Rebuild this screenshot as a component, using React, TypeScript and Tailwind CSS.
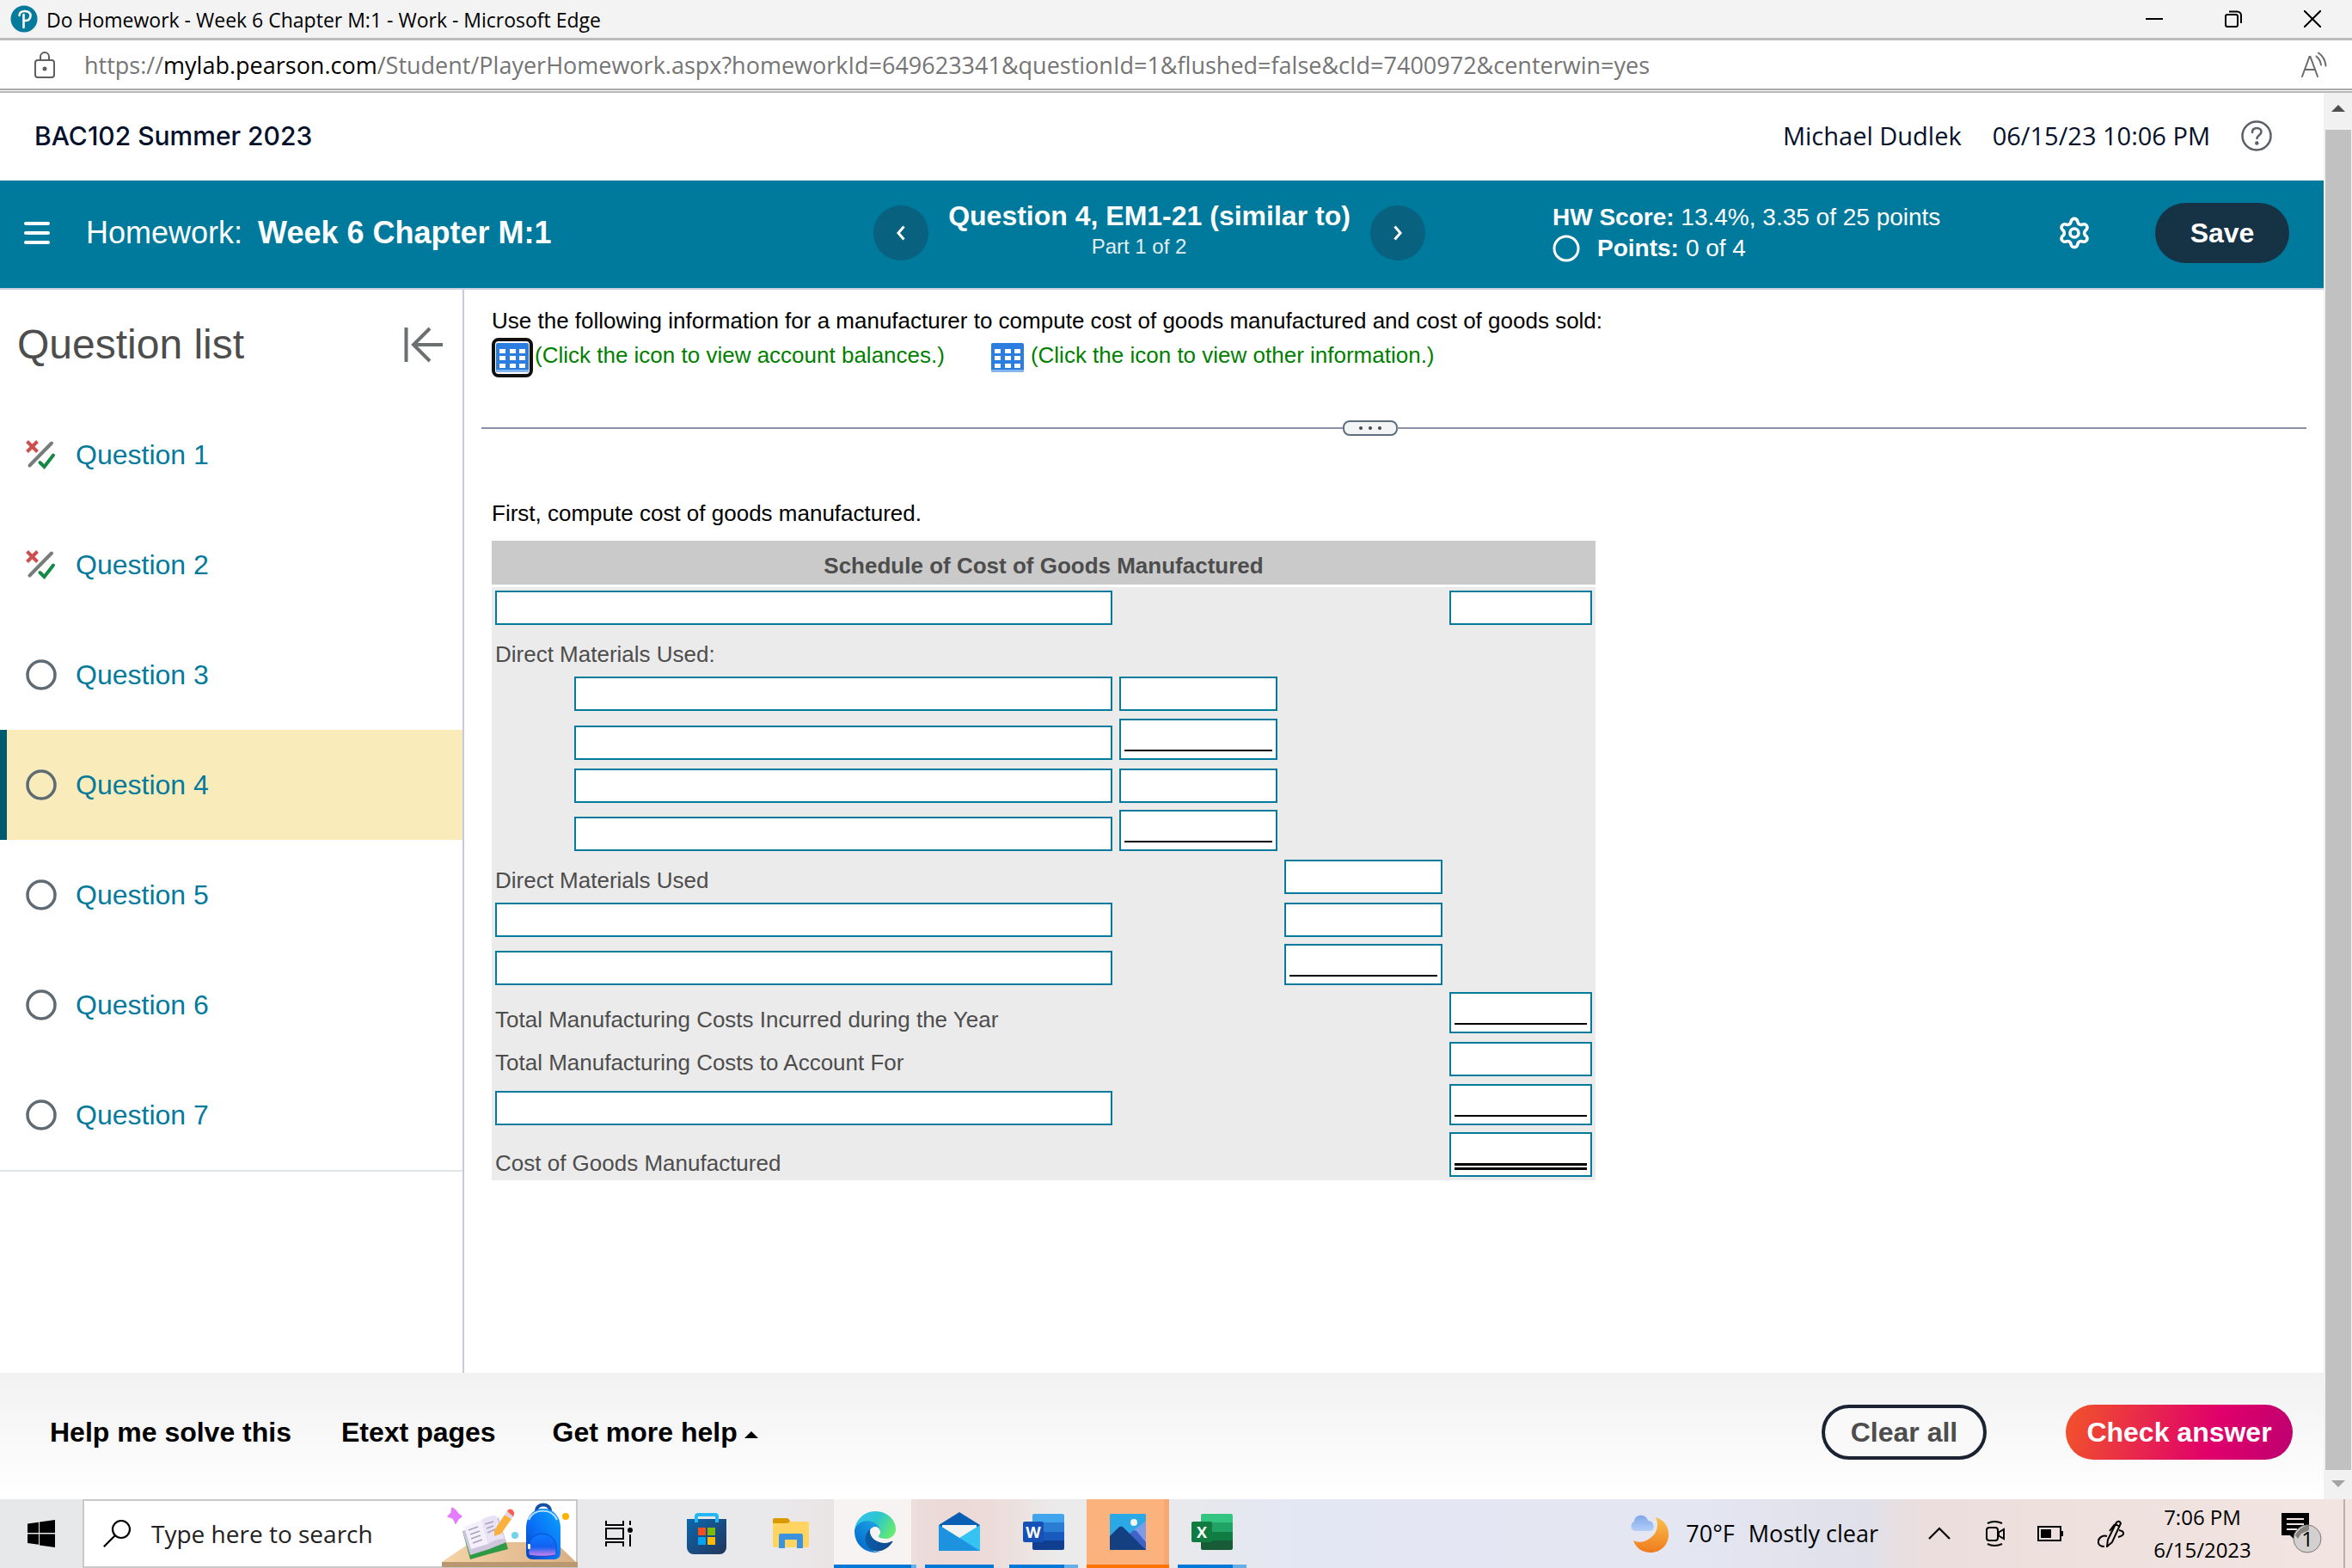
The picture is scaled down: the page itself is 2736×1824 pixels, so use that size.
import React, { useState } from "react";
import { Settings } from "lucide-react";

type Status = "partial" | "open";

const questions: { id: number; status: Status }[] = [
  { id: 1, status: "partial" },
  { id: 2, status: "partial" },
  { id: 3, status: "open" },
  { id: 4, status: "open" },
  { id: 5, status: "open" },
  { id: 6, status: "open" },
  { id: 7, status: "open" },
];

type Line = "none" | "single" | "double";

type ScheduleRow = {
  height: string;
  label?: string;
  name?: "full" | "indent";
  col?: 1 | 2 | 3;
  line?: Line;
};

const schedule: ScheduleRow[] = [
  { height: "h-[50px]", name: "full", col: 3 },
  { height: "h-[50px]", label: "Direct Materials Used:" },
  { height: "h-[50px]", name: "indent", col: 1 },
  { height: "h-[57px]", name: "indent", col: 1, line: "single" },
  { height: "h-[50px]", name: "indent", col: 1 },
  { height: "h-[56px]", name: "indent", col: 1, line: "single" },
  { height: "h-[50px]", label: "Direct Materials Used", col: 2 },
  { height: "h-[50px]", name: "full", col: 2 },
  { height: "h-[56px]", name: "full", col: 2, line: "single" },
  { height: "h-[56px]", label: "Total Manufacturing Costs Incurred during the Year", col: 3, line: "single" },
  { height: "h-[50px]", label: "Total Manufacturing Costs to Account For", col: 3 },
  { height: "h-[57px]", name: "full", col: 3, line: "single" },
  { height: "h-[60px]", label: "Cost of Goods Manufactured", col: 3, line: "double" },
];

const AmountBox = ({ line = "none", label }: { line?: Line; label: string }) => {
  if (line === "none") {
    return (
      <input
        aria-label={label}
        className="block h-10 w-full border-2 border-[#047a9c] bg-white px-1 text-right outline-none"
      />
    );
  }
  return (
    <div
      className={`border-2 border-[#047a9c] bg-white px-1 ${line === "double" ? "h-[52px] pb-[6px]" : "h-12 pb-2"}`}
    >
      <input
        aria-label={label}
        className={`block h-full w-full border-black bg-white text-right outline-none ${line === "double" ? "border-b-8 border-double" : "border-b-2"}`}
      />
    </div>
  );
};

const TableIcon = () => (
  <svg viewBox="0 0 38 34" className="h-[34px] w-[38px] shrink-0">
    <rect width="38" height="34" rx="2" fill="#2b7de0" />
    <rect y="31" width="38" height="3" rx="1" fill="#86b4ec" />
    {[7, 15, 24].map((y) =>
      [4, 16, 27].map((x) => (
        <rect key={`${x}-${y}`} x={x} y={y} width="7" height="5" fill="#fff" />
      ))
    )}
  </svg>
);

const StatusIcon = ({ status }: { status: Status }) =>
  status === "partial" ? (
    <svg viewBox="0 0 36 36" className="h-9 w-9" fill="none">
      <path d="M1.500 2.500 13.500 14.500M13.500 2.500 1.500 14.500" stroke="#cd4f4d" strokeWidth="4" />
      <path d="M30 4.500 4.500 30.500" stroke="#777c7c" strokeWidth="4" strokeLinecap="round" />
      <path d="m16.500 27 5 5L32 18.500" stroke="#158a45" strokeWidth="4" strokeLinecap="round" />
    </svg>
  ) : (
    <svg viewBox="0 0 36 36" className="h-9 w-9" fill="none">
      <circle cx="18" cy="18" r="16" stroke="#5f6b74" strokeWidth="3.500" />
    </svg>
  );

const PearsonIcon = () => (
  <svg viewBox="0 0 32 32" className="h-8 w-8" fill="none">
    <circle cx="16" cy="16" r="15.500" fill="#047a9c" />
    <path d="M10.500 12c0-3 2.500-5 6-5 4.500 0 7 2 7 5.500s-3 6-6.500 5.500" stroke="#fff" strokeWidth="2.600" strokeLinecap="round" />
    <path d="M15.500 11v15" stroke="#fff" strokeWidth="2.600" strokeLinecap="round" />
  </svg>
);

const TitleBar = () => (
  <div className="flex h-[47px] items-center border-b-[3px] border-[#bcbcbc] bg-[#f3f3f3] pl-3">
    <PearsonIcon />
    <span className="ml-[10px] pt-[2px] font-['Open_Sans',sans-serif] text-[23px] leading-8 text-black">
      Do Homework - Week 6 Chapter M:1 - Work - Microsoft Edge
    </span>
    <div className="ml-auto flex gap-[52px] pr-[26px]">
      <button aria-label="Minimize" className="flex h-10 w-10 items-center justify-center">
        <svg viewBox="0 0 20 20" className="h-5 w-5" fill="none" stroke="#000" strokeWidth="2">
          <path d="M0 10h20" />
        </svg>
      </button>
      <button aria-label="Restore" className="flex h-10 w-10 items-center justify-center">
        <svg viewBox="0 0 20 20" className="h-5 w-5" fill="none" stroke="#000" strokeWidth="2">
          <rect x="1" y="5" width="14" height="14" rx="2" />
          <path d="M5 1.500h9.500a4.500 4.500 0 0 1 4.500 4.500v9" />
        </svg>
      </button>
      <button aria-label="Close" className="flex h-10 w-10 items-center justify-center">
        <svg viewBox="0 0 20 20" className="h-5 w-5" fill="none" stroke="#000" strokeWidth="2">
          <path d="m0 0 20 20M20 0 0 20" />
        </svg>
      </button>
    </div>
  </div>
);

const AddressBar = () => (
  <div className="flex h-[61px] flex-col">
    <div className="flex flex-1 items-center bg-white pl-10 pr-7 pt-[2px]">
      <svg viewBox="0 0 24 32" className="h-8 w-6" fill="none" stroke="#5f5f5f" strokeWidth="2">
        <rect x="1" y="10" width="22" height="20" rx="3" />
        <path d="M7 10V6a5 5 0 0 1 10 0v4" />
        <circle cx="12" cy="20" r="1.500" fill="#5f5f5f" />
      </svg>
      <span className="ml-[34px] font-['Open_Sans',sans-serif] text-[27px] leading-9 text-[#757575]">
        https://<span className="text-black">mylab.pearson.com</span>
        /Student/PlayerHomework.aspx?homeworkId=649623341&amp;questionId=1&amp;flushed=false&amp;cId=7400972&amp;centerwin=yes
      </span>
      <button aria-label="Read aloud" className="ml-auto">
        <svg viewBox="0 0 32 32" className="h-8 w-8" fill="none" stroke="#6b6b6b" strokeWidth="2" strokeLinecap="round">
          <path d="M2 29 10.500 6h1L20 29M5 21h12" />
          <path d="M18.500 5.500c3 2.500 5 6 5.500 10M21 1.500c5 3.500 8 9 8.500 15" />
        </svg>
      </button>
    </div>
    <div className="h-[5px] border-b-2 border-t-2 border-b-[#b8b8b8] border-t-[#a8a8a8] bg-white" />
  </div>
);

const CourseHeader = () => (
  <header className="flex h-[102px] items-center bg-white pb-[2px] pl-10 pr-[60px] text-[#05112a]">
    <h1 className="font-['Inter',sans-serif] text-[30px] font-medium leading-10">BAC102 Summer 2023</h1>
    <div className="ml-auto flex items-center font-['Open_Sans',sans-serif] text-[29px] leading-10">
      <span>Michael Dudlek</span>
      <span className="ml-9">06/15/23 10:06 PM</span>
      <button aria-label="Help" className="ml-9">
        <svg viewBox="0 0 36 36" className="h-9 w-9" fill="none" stroke="#5c6066" strokeWidth="2.500" strokeLinecap="round">
          <circle cx="18" cy="18" r="16.500" />
          <path d="M13 14c0-3 2-5 5.300-5 3 0 5.200 1.800 5.200 4.500 0 3.500-5 4-5 7.500" />
          <circle cx="18.300" cy="26.500" r="1" fill="#5c6066" />
        </svg>
      </button>
    </div>
  </header>
);

const NavButton = ({ dir }: { dir: "prev" | "next" }) => (
  <button
    aria-label={dir === "prev" ? "Previous question" : "Next question"}
    className="flex h-16 w-16 items-center justify-center rounded-full bg-[#08617e]"
  >
    <svg viewBox="0 0 12 18" className="h-[18px] w-3" fill="none" stroke="#fff" strokeWidth="3">
      {dir === "prev" ? <path d="M9.500 1.500 3 9l6.500 7.500" /> : <path d="M2.500 1.500 9 9l-6.500 7.500" />}
    </svg>
  </button>
);

const AssignmentBar = () => (
  <div className="flex h-[127px] items-center border-b-2 border-[#c7cfe0] bg-[#007a9c] pb-1 pl-7 pr-10 text-white">
    <button aria-label="Menu" className="flex w-[30px] flex-col gap-[7px]">
      <span className="h-1 rounded bg-white" />
      <span className="h-1 rounded bg-white" />
      <span className="h-1 rounded bg-white" />
    </button>
    <h2 className="ml-[42px] w-[916px] text-[36px] leading-10">
      Homework:<b className="ml-[18px]">Week 6 Chapter M:1</b>
    </h2>
    <NavButton dir="prev" />
    <div className="w-[514px]">
      <div className="text-center text-[32px] font-bold leading-8">Question 4, EM1-21 (similar to)</div>
      <div className="pr-6 text-center text-[24px] leading-10 text-[#e3eef3]">Part 1 of 2</div>
    </div>
    <NavButton dir="next" />
    <div className="ml-[148px] text-[28px] leading-9">
      <div>
        <b>HW Score:</b> 13.4%, 3.35 of 25 points
      </div>
      <div className="flex items-center">
        <svg viewBox="0 0 32 32" className="mr-5 h-8 w-8" fill="none" stroke="#fff" strokeWidth="3">
          <circle cx="16" cy="16" r="14" />
        </svg>
        <b className="mr-2">Points:</b>0 of 4
      </div>
    </div>
    <div className="ml-auto flex items-center gap-[74px]">
      <button aria-label="Settings">
        <Settings size={40} strokeWidth={2.2} />
      </button>
      <button className="h-[70px] w-[156px] rounded-full bg-[#163245] text-[32px] font-bold">Save</button>
    </div>
  </div>
);

const Sidebar = ({ current, onSelect }: { current: number; onSelect: (id: number) => void }) => (
  <aside className="w-[540px] shrink-0 border-r-2 border-[#c7cadb] bg-white">
    <div className="flex h-32 items-center justify-between pl-5 pr-[22px]">
      <h2 className="text-[48px] leading-none text-[#4d4d4d]">Question list</h2>
      <button aria-label="Collapse question list">
        <svg viewBox="0 0 46 42" className="h-[42px] w-[46px]" fill="none" stroke="#6a7070" strokeWidth="4">
          <path d="M2.500 1v40M45 21H11M30 2 11 21l19 19" />
        </svg>
      </button>
    </div>
    <ul className="border-b-2 border-[#e1e3ea]">
      {questions.map((q) => (
        <li key={q.id}>
          <a
            href={`#q${q.id}`}
            onClick={() => onSelect(q.id)}
            className={`flex h-32 items-center border-l-8 pl-[22px] text-[32px] text-[#047a9c] ${q.id === current ? "border-[#005a70] bg-[#f9ecba]" : "border-transparent"}`}
          >
            <StatusIcon status={q.status} />
            <span className="ml-[22px]">Question {q.id}</span>
          </a>
        </li>
      ))}
    </ul>
  </aside>
);

const ScheduleTable = () => (
  <table className="mt-3 w-[1284px] table-fixed border-collapse text-[26px] leading-8 text-[#4d4d4d]">
    <colgroup>
      <col />
      <col className="w-48" />
      <col className="w-48" />
      <col className="w-[174px]" />
    </colgroup>
    <thead>
      <tr className="h-[52px]">
        <th
          colSpan={4}
          className="border-b-[3px] border-white bg-[#cacaca] p-0 pb-[6px] text-center align-bottom font-bold"
        >
          Schedule of Cost of Goods Manufactured
        </th>
      </tr>
    </thead>
    <tbody className="bg-[#ebebeb]">
      {schedule.map((row, i) => (
        <tr key={i} className={row.height}>
          <td className={`p-1 pt-0 align-bottom ${row.name === "indent" ? "pl-24" : ""}`}>
            {row.name ? (
              <input
                aria-label={`Account, line ${i + 1}`}
                className="block h-10 w-full border-2 border-[#047a9c] bg-white px-2 outline-none"
              />
            ) : (
              row.label
            )}
          </td>
          {[1, 2, 3].map((c) => (
            <td key={c} className="p-1 pt-0 align-bottom">
              {row.col === c && <AmountBox line={row.line} label={`Amount, line ${i + 1}`} />}
            </td>
          ))}
        </tr>
      ))}
    </tbody>
  </table>
);

const Content = () => (
  <main className="min-w-0 flex-1 bg-white px-5 pt-4 text-[26px] leading-10 text-black">
    <div className="pl-3">
      <p>Use the following information for a manufacturer to compute cost of goods manufactured and cost of goods sold:</p>
      <div className="flex items-start text-[#008000]">
        <button
          aria-label="View account balances"
          className="flex h-[46px] w-12 items-center justify-center rounded-lg border-4 border-[#101010] bg-white"
        >
          <TableIcon />
        </button>
        <span className="ml-[2px]">(Click the icon to view account balances.)</span>
        <button aria-label="View other information" className="ml-[54px] pt-[6px]">
          <TableIcon />
        </button>
        <span className="ml-2">(Click the icon to view other information.)</span>
      </div>
    </div>
    <div className="mt-[50px] flex items-center">
      <div className="h-[2px] grow basis-0 bg-[#8a90a6]" />
      <button
        aria-label="Resize panels"
        className="-mx-px flex h-[18px] w-16 items-center justify-center gap-[7px] rounded-lg border-2 border-[#5f6e7c] bg-[#f3f4f6]"
      >
        <span className="h-1 w-1 rounded-full bg-[#444]" />
        <span className="h-1 w-1 rounded-full bg-[#444]" />
        <span className="h-1 w-1 rounded-full bg-[#444]" />
      </button>
      <div className="h-[2px] grow basis-14 bg-[#8a90a6]" />
    </div>
    <div className="mt-[70px] pl-3">
      <p>First, compute cost of goods manufactured.</p>
      <ScheduleTable />
    </div>
  </main>
);

const Footer = () => (
  <footer className="flex h-[147px] items-center bg-gradient-to-b from-[#f1f1f1] to-white pb-[9px] pl-[58px] pr-9 text-[32px] font-bold text-black">
    <button>Help me solve this</button>
    <button className="ml-[58px]">Etext pages</button>
    <button className="ml-[66px] flex items-center gap-2">
      Get more help
      <svg viewBox="0 0 16 8" className="mt-[6px] h-2 w-4">
        <path d="M0 8 8 0l8 8z" />
      </svg>
    </button>
    <div className="ml-auto flex gap-[92px]">
      <button className="h-16 w-48 rounded-full border-4 border-[#1a2332] bg-[#f9f9f9] text-[#4d4d4d]">Clear all</button>
      <button className="h-16 w-[264px] rounded-full bg-[linear-gradient(105deg,#f04e2e_5%,#e0006b_65%,#bd0070_100%)] text-white">
        Check answer
      </button>
    </div>
  </footer>
);

const ScrollBar = () => (
  <div className="flex w-[33px] shrink-0 flex-col items-center bg-[#f1f1f1]">
    <svg viewBox="0 0 16 8" className="my-[14px] h-2 w-4" fill="#505050">
      <path d="M0 8 8 0l8 8z" />
    </svg>
    <div className="mt-[7px] w-[30px] flex-1 bg-[#c1c1c1]" />
    <svg viewBox="0 0 16 8" className="mb-[14px] mt-3 h-2 w-4" fill="#a3a3a3">
      <path d="m0 0 8 8 8-8z" />
    </svg>
  </div>
);

const SearchArt = () => (
  <svg viewBox="0 0 158 75" className="h-[75px] w-[158px]">
    <defs>
      <linearGradient id="desk" x1="0" x2="1">
        <stop offset="0" stopColor="#f6d3a8" />
        <stop offset="1" stopColor="#d8b083" />
      </linearGradient>
      <linearGradient id="bag" x1="1" x2="0" y1="0" y2="1">
        <stop offset="0" stopColor="#0aa5ff" />
        <stop offset=".6" stopColor="#0a6cf5" />
        <stop offset="1" stopColor="#0540b5" />
      </linearGradient>
      <linearGradient id="pocket" x1="0" x2="0" y1="0" y2="1">
        <stop offset="0" stopColor="#0b7cff" />
        <stop offset=".6" stopColor="#1560f0" />
        <stop offset="1" stopColor="#d884ee" />
      </linearGradient>
    </defs>
    <path d="M0 69 34 46h98l24 23z" fill="url(#desk)" />
    <path d="M0 69h158v6H0z" fill="#b99871" />
    <path d="M15 8l4 5 4 3-4 3-3 5-3-6-6-2 4-4 1-6z" fill="#e57bff" stroke="#e57bff" strokeLinejoin="round" strokeWidth="1.500" />
    <path d="M24 33l9 33 21-6 23-6-10-32-22 8z" fill="#2f9a45" />
    <path d="M24 33l9 28 22-7 20-8-9-29-20 9z" fill="#cfc5dc" />
    <path d="M26 28l20-8 8 28-20 6z" fill="#f3f0fb" />
    <path d="M46 20c4-3 11-5 17-5l10 27c-6 0-14 2-19 6z" fill="#e9e3f6" />
    <path d="M31 32l11-4M33 37l11-4M34 42l11-4M36 47l11-4M50 25l10-3M52 30l8-3M53 35l9-4" stroke="#a9a3bb" strokeWidth="1.500" />
    <path d="M61 32 73 14l8 5-12 17-8 3z" fill="#fbb03b" />
    <path d="M73 14l3-4 8 5-3 4z" fill="#d9d4e6" />
    <path d="M76 10c2-5 9-2 8 4l-1 2z" fill="#ff5d4f" />
    <circle cx="85" cy="38" r="4" fill="#6fd5e8" />
    <path d="M110 10c0-10 16-10 16 0" fill="none" stroke="#1450a5" strokeWidth="4" />
    <path d="M98 30c0-15 9-23 20-23s20 8 20 23v28q0 8-8 8h-24q-8 0-8-8z" fill="url(#bag)" />
    <path d="M101 20c6-14 27-14 33 0" fill="none" stroke="#bfe0ff" strokeWidth="2" />
    <path d="M101 60V52c0-21 32-21 32 0v8c0 3-32 3-32 0z" fill="url(#pocket)" stroke="#0a4fc0" />
    <rect x="100" y="48" width="3" height="6" rx="1" fill="#fff" />
    <circle cx="144" cy="16" r="4" fill="#ffb300" />
  </svg>
);

const StoreIcon = () => (
  <svg viewBox="0 0 48 48" className="h-12 w-12">
    <defs>
      <linearGradient id="store" x1="0" x2="1" y1="0" y2="1">
        <stop offset="0" stopColor="#0b68ae" />
        <stop offset="1" stopColor="#23355b" />
      </linearGradient>
    </defs>
    <path d="M1 7h46v33a8 8 0 0 1-8 8H9a8 8 0 0 1-8-8z" fill="url(#store)" />
    <path d="M12 11V4q0-2 2-2h20q2 0 2 2v7" fill="none" stroke="#25b8f5" strokeWidth="4" />
    <path d="M14 17h9v9h-9z" fill="#f25022" />
    <path d="M25 17h9v9h-9z" fill="#7fba00" />
    <path d="M14 28h9v9h-9z" fill="#00a4ef" />
    <path d="M25 28h9v9h-9z" fill="#ffb900" />
  </svg>
);

const FolderIcon = () => (
  <svg viewBox="0 0 42 36" className="h-9 w-[42px]">
    <path d="M0 2q0-2 2-2h14q3 0 4 4v4H0z" fill="#d99a00" />
    <path d="M0 6h16q2 0 4-2h20q2 0 2 2v26q0 2-2 2H2q-2 0-2-2z" fill="#ffd461" />
    <path d="M7 35V20q0-2 2-2h24q2 0 2 2v15h-7V25H14v10z" fill="#3c92dc" />
  </svg>
);

const EdgeIcon = () => (
  <svg viewBox="0 0 256 256" className="h-12 w-12">
    <defs>
      <linearGradient id="e1" x1=".2" x2="1" y1=".6" y2=".6">
        <stop offset="0" stopColor="#0c59a4" />
        <stop offset="1" stopColor="#114a8b" />
      </linearGradient>
      <linearGradient id="e2" x1=".8" x2=".2" y1=".2" y2="1">
        <stop offset="0" stopColor="#1b9de2" />
        <stop offset=".6" stopColor="#0b7cd4" />
        <stop offset="1" stopColor="#0067c8" />
      </linearGradient>
      <linearGradient id="e3" x1="0" x2="1" y1=".2" y2=".6">
        <stop offset="0" stopColor="#35c1f1" />
        <stop offset=".5" stopColor="#2cc6cf" />
        <stop offset="1" stopColor="#66eb6e" />
      </linearGradient>
    </defs>
    <g transform="translate(-4.630 -4.920)">
      <path
        fill="url(#e1)"
        d="M235.680 190.460a93.730 93.730 0 0 1-10.540 4.710 101.870 101.870 0 0 1-35.900 6.460c-47.320 0-88.540-32.550-88.540-74.320A31.480 31.480 0 0 1 117.130 100c-42.800 1.800-53.800 46.400-53.800 72.530 0 73.880 68.090 81.370 82.760 81.370 7.910 0 19.840-2.300 27-4.560l1.310-.440a128.340 128.340 0 0 0 66.600-52.800 4 4 0 0 0-5.320-5.640z"
      />
      <path
        fill="url(#e2)"
        d="M110.340 246.340A79.200 79.200 0 0 1 87.600 225a80.720 80.720 0 0 1 29.530-120c3.120-1.470 8.450-4.130 15.540-4a32.350 32.350 0 0 1 25.690 13 31.880 31.880 0 0 1 6.360 18.660c0-.210 24.460-79.600-80-79.600-43.900 0-80 41.660-80 78.210a130.150 130.150 0 0 0 12.110 56 128 128 0 0 0 156.380 67.110 75.550 75.550 0 0 1-62.780-8z"
      />
      <path
        fill="url(#e3)"
        d="M156.940 153.780c-.810 1.050-3.300 2.500-3.300 5.660 0 2.610 1.700 5.120 4.720 7.230 14.380 10 41.490 8.680 41.560 8.680a59.560 59.560 0 0 0 30.270-8.350 61.380 61.380 0 0 0 30.430-52.880c.260-22.410-8-37.310-11.340-43.910C228.090 28.760 182.350 4.920 132.610 4.920a128 128 0 0 0-128 126.200c.480-36.540 36.800-66.050 80-66.050 3.500 0 23.460.340 42 10.070 16.340 8.580 24.900 18.940 30.850 29.210 6.180 10.670 7.280 24.150 7.280 29.520s-2.740 13.330-7.800 19.910z"
      />
    </g>
  </svg>
);

const MailIcon = () => (
  <svg viewBox="0 0 48 46" className="h-[46px] w-12">
    <path d="M0 15 24 0l24 15v4H0z" fill="#0a5fb4" />
    <path d="M4 15h40v12L24 31 4 27z" fill="#f3f3f3" />
    <path d="M0 15v30h48V15L24 30z" fill="#35c3f3" />
    <path d="M0 15v30h48z" fill="#1d93df" />
  </svg>
);

const OfficeIcon = ({ letter, shades, tile }: { letter: string; shades: string[]; tile: string }) => (
  <svg viewBox="0 0 48 44" className="h-11 w-12">
    <path d="M13 1h33q2 0 2 2v8H11V3q0-2 2-2z" fill={shades[0]} />
    <path d="M11 11h37v11H11z" fill={shades[1]} />
    <path d="M11 22h37v10H11z" fill={shades[2]} />
    <path d="M11 32h37v9q0 2-2 2H13q-2 0-2-2z" fill={shades[3]} />
    <rect y="10" width="24" height="24" rx="2" fill={tile} />
    <text x="12" y="28.500" textAnchor="middle" fontFamily="Open Sans, sans-serif" fontWeight="700" fontSize="18" fill="#fff">
      {letter}
    </text>
  </svg>
);

const PhotosIcon = () => (
  <svg viewBox="0 0 42 42" className="h-[42px] w-[42px]">
    <rect width="42" height="42" rx="1" fill="#2aa9e6" />
    <path d="M42 8v34H16l12-23z" fill="#7f9be6" />
    <path d="M22 25q5-8 9-5l11 13v9H26z" fill="#3f62c8" />
    <path d="M0 26 10 16q3-3 6 0l26 26H1q-1 0-1-1z" fill="#143f80" />
    <circle cx="28" cy="10" r="4" fill="#f3f3f3" />
  </svg>
);

const apps = [
  {
    name: "Microsoft Edge",
    icon: <EdgeIcon />,
    tile: "bg-[#f8f3f3] border-r-[6px] border-[#ecdfdd] pl-[6px]",
    bar: "w-24 border-r-[6px] border-[#66aee8] bg-[#0078d7]",
  },
  { name: "Mail", icon: <MailIcon />, tile: "", bar: "w-20 bg-[#0078d7]" },
  {
    name: "Word",
    icon: <OfficeIcon letter="W" shades={["#41a5ee", "#2b7cd3", "#185abd", "#103f91"]} tile="#1651b5" />,
    tile: "",
    bar: "w-20 border-r-[16px] border-[#66aee8] bg-[#0078d7]",
  },
  {
    name: "Photos",
    icon: <PhotosIcon />,
    tile: "bg-[#fcb27c] border-r-[6px] border-[#f6a972] pl-[6px]",
    bar: "w-24 bg-[#ff7300]",
  },
  {
    name: "Excel",
    icon: <OfficeIcon letter="X" shades={["#33c481", "#21a366", "#107c41", "#185c37"]} tile="#107c41" />,
    tile: "",
    bar: "w-20 border-r-[16px] border-[#66aee8] bg-[#0078d7]",
  },
];

const Taskbar = () => (
  <div className="flex h-20 items-center bg-[linear-gradient(90deg,#e7e8ea_0%,#e9e9eb_33%,#ecdad7_40%,#ecdbd8_42%,#ebebeb_45%,#e9e9ec_50%,#e3e7f3_55%,#e4e6f1_72%,#dfe0ea_79%,#ecdedc_82%,#f2e4e0_100%)] font-['Open_Sans',sans-serif] text-black">
    <button aria-label="Start" className="flex w-24 justify-center">
      <svg viewBox="0 0 32 32" className="h-8 w-8">
        <path d="M0 4.500 13 2.700V15H0zM14 2.500 32 0v15H14zM0 16.500h13v12.300L0 27zM14 16.500h18V32l-18-2.500z" />
      </svg>
    </button>
    <label className="flex h-20 w-[576px] items-center border-2 border-[#c9c9c9] bg-white pl-[22px]">
      <svg viewBox="0 0 32 32" className="h-8 w-8 shrink-0" fill="none" stroke="#000" strokeWidth="2.200">
        <circle cx="21" cy="11" r="10" />
        <path d="M14 18 .800 31.200" />
      </svg>
      <input
        placeholder="Type here to search"
        className="ml-6 w-[338px] bg-transparent text-[28px] text-[#222] outline-none placeholder:text-[#222]"
      />
      <div className="-mb-[3px] flex w-[158px] shrink-0 justify-end">
        <SearchArt />
      </div>
    </label>
    <button aria-label="Task view" className="flex w-24 justify-center">
      <svg viewBox="0 0 32 32" className="h-8 w-8" fill="none" stroke="#000" strokeWidth="2">
        <path d="M1 1v5h20V1M1 10h20v12H1zM1 31v-5h20v5M29 1v5M29 17v14" />
        <circle cx="29" cy="12" r="3" fill="#000" stroke="none" />
      </svg>
    </button>
    <button aria-label="Microsoft Store" className="ml-[6px] flex w-24 justify-center">
      <StoreIcon />
    </button>
    <button aria-label="File Explorer" className="ml-[2px] flex w-24 justify-center">
      <FolderIcon />
    </button>
    <div className="ml-[2px] flex gap-[2px]">
      {apps.map((app) => (
        <button key={app.name} aria-label={app.name} className="flex h-20 w-24 flex-col items-center">
          <span className={`flex w-24 flex-1 items-center justify-center ${app.tile}`}>{app.icon}</span>
          <span className={`h-1 ${app.bar}`} />
        </button>
      ))}
    </div>
    <div className="ml-auto flex items-center">
      <svg viewBox="0 0 46 44" className="h-11 w-[46px]">
        <defs>
          <linearGradient id="moon" x1="0" x2="0" y1="0" y2="1">
            <stop offset="0" stopColor="#f9c04c" />
            <stop offset="1" stopColor="#f07a1c" />
          </linearGradient>
          <linearGradient id="cloud" x1="0" x2="0" y1="0" y2="1">
            <stop offset="0" stopColor="#7fa6ea" />
            <stop offset="1" stopColor="#b5d0f8" />
          </linearGradient>
        </defs>
        <path d="M31 3c10 3 15 11 15 20 0 12-9 21-21 21-9 0-17-5-20-14 6 3 14 2 20-3 8-6 10-15 6-24z" fill="url(#moon)" />
        <path d="M6 19a6 6 0 0 1 0-11C6-1 20-2 22 7c8 0 9 12 2 12z" fill="url(#cloud)" />
      </svg>
      <span className="ml-5 text-[27px]">70°F</span>
      <span className="ml-4 text-[27px]">Mostly clear</span>
      <button aria-label="Show hidden icons" className="ml-[58px]">
        <svg viewBox="0 0 26 16" className="h-4 w-[26px]" fill="none" stroke="#000" strokeWidth="2.200">
          <path d="M1 14 13 2l12 12" />
        </svg>
      </button>
      <svg viewBox="0 0 24 32" className="ml-[40px] h-8 w-6" fill="none" stroke="#000" strokeWidth="2">
        <rect x="2" y="9" width="13" height="15" rx="3" />
        <path d="M16 14.500 22 11v11l-6-3.500zM3 4q8-4 17 0M3 28q8 4 17 0" />
      </svg>
      <svg viewBox="0 0 30 18" className="ml-[37px] h-[18px] w-[30px]" fill="none" stroke="#000" strokeWidth="2">
        <path d="M1 1h26v16H1z" />
        <path d="M4 4h12v10H4zM27 6h3v6h-3z" fill="#000" stroke="none" />
      </svg>
      <svg viewBox="0 0 32 32" className="ml-[40px] h-8 w-8" fill="none" stroke="#000" strokeWidth="2">
        <path d="m11 31 1-8L22 3q3-3 5 1L17 26zM21 5l5 3M14 13l6-8" />
        <path d="M11 19C5 17 0 22 1 27q1 4 7 4M25 12c6 1 8 6-1 8" />
      </svg>
      <div className="ml-[30px] w-[120px] text-center text-[24px] leading-[38px]">
        <div>7:06 PM</div>
        <div>6/15/2023</div>
      </div>
      <button aria-label="Notifications" className="relative ml-8 mr-6 h-12 w-12">
        <svg viewBox="0 0 48 48" className="h-12 w-12">
          <path d="M0 0h32v26H18l-4 4-4-4H0z" />
          <path d="M6 7h20M6 13h20M6 19h12" stroke="#f2e4e0" strokeWidth="2" />
          <circle cx="30" cy="30" r="16" fill="#d4d0cf" stroke="#777" />
          <path d="M16 26q5-10 16-12v6l-9 4-4 6z" fill="#858180" />
        </svg>
        <span className="absolute left-[22px] top-[16px] w-4 text-center text-[24px] leading-7">1</span>
      </button>
      <div className="h-20 w-[10px] border-l-2 border-[#b9aeac]" />
    </div>
  </div>
);

const App = () => {
  const [current, setCurrent] = useState(4);

  return (
    <div className="flex min-h-screen flex-col bg-white font-['Liberation_Sans',Arial,sans-serif]">
      <TitleBar />
      <AddressBar />
      <div className="flex flex-1">
        <div className="flex min-w-0 flex-1 flex-col">
          <CourseHeader />
          <AssignmentBar />
          <div className="flex flex-1">
            <Sidebar current={current} onSelect={setCurrent} />
            <Content />
          </div>
          <Footer />
        </div>
        <ScrollBar />
      </div>
      <Taskbar />
    </div>
  );
};

export default App;
